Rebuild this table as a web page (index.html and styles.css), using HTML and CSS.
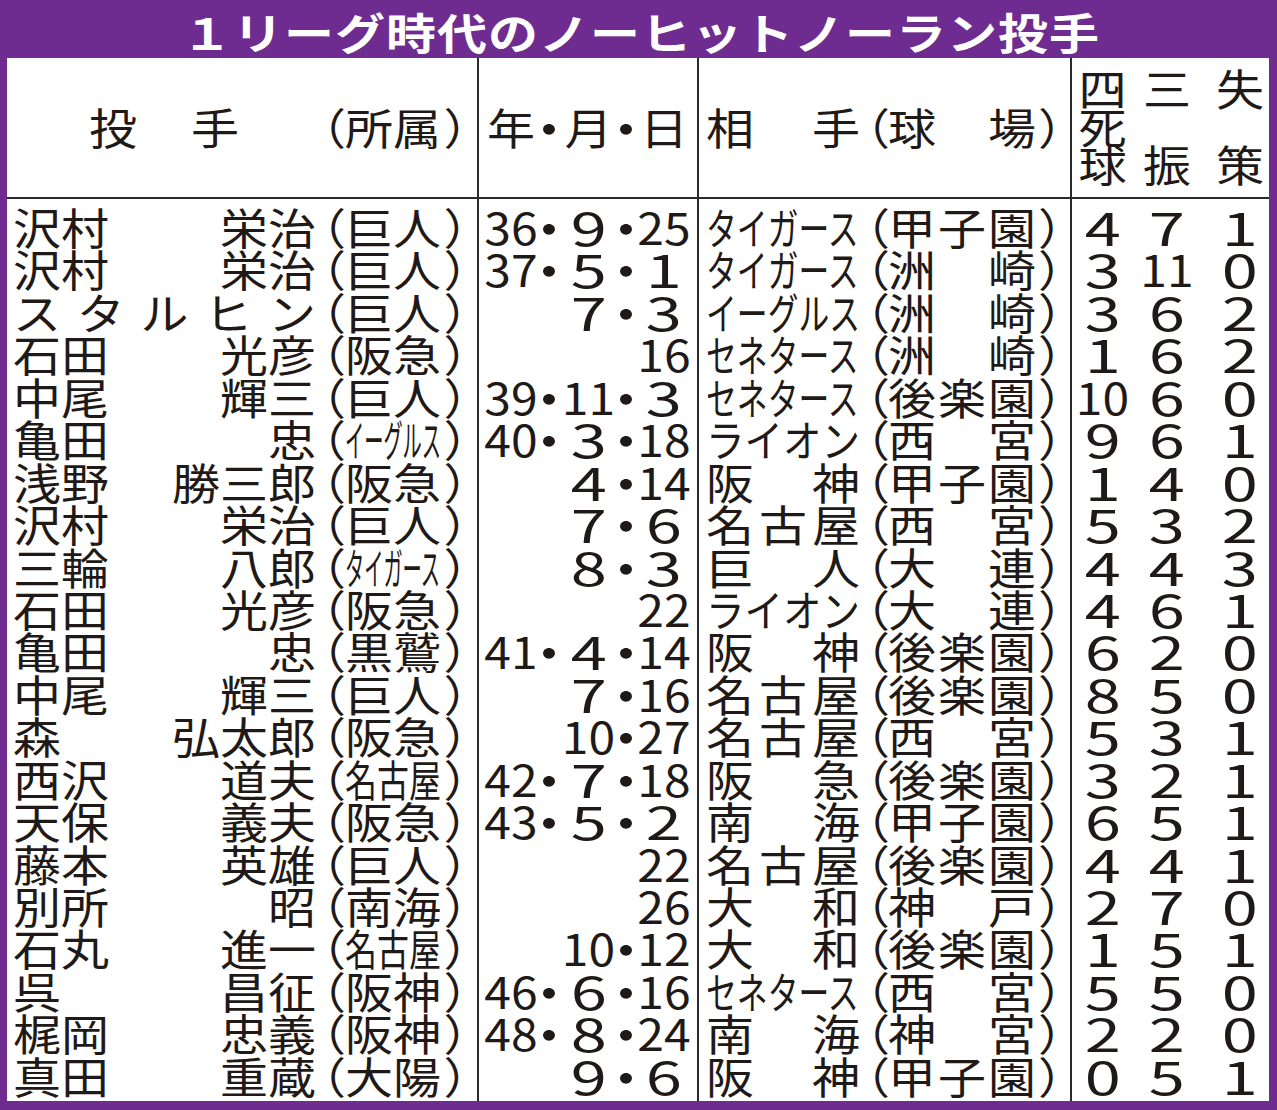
FILE: index.html
```html
<!DOCTYPE html>
<html lang="ja">
<head>
<meta charset="utf-8">
<title>１リーグ時代のノーヒットノーラン投手</title>
<link rel="stylesheet" href="styles.css">
</head>
<body>
<div class="frame">
  <h1 class="title">１リーグ時代のノーヒットノーラン投手</h1>
  <div class="tbl">
    <div class="h nm">
      <div class="r"><span class="hn1">投</span><span class="hn2">手</span><i class="pl hp">（</i><span class="tc">所属</span><i class="pr">）</i></div>
    </div>
    <div class="h dt">
      <div class="r"><span class="s y">年</span><span class="s d1">・</span><span class="s m">月</span><span class="s d2">・</span><span class="s dd">日</span></div>
    </div>
    <div class="h op">
      <div class="r"><span class="tn"><span>相</span><span>手</span></span><i class="pl">（</i><span class="st"><span>球</span><span>場</span></span><i class="pr">）</i></div>
    </div>
    <div class="h sv last">
      <div class="vh"><span>四<br>死<br>球</span><span>三<br><br>振</span><span>失<br><br>策</span></div>
    </div>

    <div class="b nm">
      <div class="r"><span class="sur">沢村</span><span class="gn">栄治</span><i class="pl">（</i><span class="tc">巨人</span><i class="pr">）</i></div>
      <div class="r"><span class="sur">沢村</span><span class="gn">栄治</span><i class="pl">（</i><span class="tc">巨人</span><i class="pr">）</i></div>
      <div class="r"><span class="spread"><span>ス</span><span>タ</span><span>ル</span><span>ヒ</span><span>ン</span></span><i class="pl">（</i><span class="tc">巨人</span><i class="pr">）</i></div>
      <div class="r"><span class="sur">石田</span><span class="gn">光彦</span><i class="pl">（</i><span class="tc">阪急</span><i class="pr">）</i></div>
      <div class="r"><span class="sur">中尾</span><span class="gn">輝三</span><i class="pl">（</i><span class="tc">巨人</span><i class="pr">）</i></div>
      <div class="r"><span class="sur">亀田</span><span class="gn">忠</span><i class="pl">（</i><span class="tc"><span class="sq n5">イーグルス</span></span><i class="pr">）</i></div>
      <div class="r"><span class="sur">浅野</span><span class="gn">勝三郎</span><i class="pl">（</i><span class="tc">阪急</span><i class="pr">）</i></div>
      <div class="r"><span class="sur">沢村</span><span class="gn">栄治</span><i class="pl">（</i><span class="tc">巨人</span><i class="pr">）</i></div>
      <div class="r"><span class="sur">三輪</span><span class="gn">八郎</span><i class="pl">（</i><span class="tc"><span class="sq n5">タイガース</span></span><i class="pr">）</i></div>
      <div class="r"><span class="sur">石田</span><span class="gn">光彦</span><i class="pl">（</i><span class="tc">阪急</span><i class="pr">）</i></div>
      <div class="r"><span class="sur">亀田</span><span class="gn">忠</span><i class="pl">（</i><span class="tc">黒鷲</span><i class="pr">）</i></div>
      <div class="r"><span class="sur">中尾</span><span class="gn">輝三</span><i class="pl">（</i><span class="tc">巨人</span><i class="pr">）</i></div>
      <div class="r"><span class="sur">森</span><span class="gn">弘太郎</span><i class="pl">（</i><span class="tc">阪急</span><i class="pr">）</i></div>
      <div class="r"><span class="sur">西沢</span><span class="gn">道夫</span><i class="pl">（</i><span class="tc"><span class="sq n3">名古屋</span></span><i class="pr">）</i></div>
      <div class="r"><span class="sur">天保</span><span class="gn">義夫</span><i class="pl">（</i><span class="tc">阪急</span><i class="pr">）</i></div>
      <div class="r"><span class="sur">藤本</span><span class="gn">英雄</span><i class="pl">（</i><span class="tc">巨人</span><i class="pr">）</i></div>
      <div class="r"><span class="sur">別所</span><span class="gn">昭</span><i class="pl">（</i><span class="tc">南海</span><i class="pr">）</i></div>
      <div class="r"><span class="sur">石丸</span><span class="gn">進一</span><i class="pl">（</i><span class="tc"><span class="sq n3">名古屋</span></span><i class="pr">）</i></div>
      <div class="r"><span class="sur">呉</span><span class="gn">昌征</span><i class="pl">（</i><span class="tc">阪神</span><i class="pr">）</i></div>
      <div class="r"><span class="sur">梶岡</span><span class="gn">忠義</span><i class="pl">（</i><span class="tc">阪神</span><i class="pr">）</i></div>
      <div class="r"><span class="sur">真田</span><span class="gn">重蔵</span><i class="pl">（</i><span class="tc">大陽</span><i class="pr">）</i></div>
    </div>

    <div class="b dt">
      <div class="r"><span class="s y">36</span><span class="s d1">・</span><span class="s m"><span class="fw">9</span></span><span class="s d2">・</span><span class="s dd">25</span></div>
      <div class="r"><span class="s y">37</span><span class="s d1">・</span><span class="s m"><span class="fw">5</span></span><span class="s d2">・</span><span class="s dd"><span class="fw">1</span></span></div>
      <div class="r"><span class="s y"></span><span class="s d1"></span><span class="s m"><span class="fw">7</span></span><span class="s d2">・</span><span class="s dd"><span class="fw">3</span></span></div>
      <div class="r"><span class="s y"></span><span class="s d1"></span><span class="s m"></span><span class="s d2"></span><span class="s dd">16</span></div>
      <div class="r"><span class="s y">39</span><span class="s d1">・</span><span class="s m">11</span><span class="s d2">・</span><span class="s dd"><span class="fw">3</span></span></div>
      <div class="r"><span class="s y">40</span><span class="s d1">・</span><span class="s m"><span class="fw">3</span></span><span class="s d2">・</span><span class="s dd">18</span></div>
      <div class="r"><span class="s y"></span><span class="s d1"></span><span class="s m"><span class="fw">4</span></span><span class="s d2">・</span><span class="s dd">14</span></div>
      <div class="r"><span class="s y"></span><span class="s d1"></span><span class="s m"><span class="fw">7</span></span><span class="s d2">・</span><span class="s dd"><span class="fw">6</span></span></div>
      <div class="r"><span class="s y"></span><span class="s d1"></span><span class="s m"><span class="fw">8</span></span><span class="s d2">・</span><span class="s dd"><span class="fw">3</span></span></div>
      <div class="r"><span class="s y"></span><span class="s d1"></span><span class="s m"></span><span class="s d2"></span><span class="s dd">22</span></div>
      <div class="r"><span class="s y">41</span><span class="s d1">・</span><span class="s m"><span class="fw">4</span></span><span class="s d2">・</span><span class="s dd">14</span></div>
      <div class="r"><span class="s y"></span><span class="s d1"></span><span class="s m"><span class="fw">7</span></span><span class="s d2">・</span><span class="s dd">16</span></div>
      <div class="r"><span class="s y"></span><span class="s d1"></span><span class="s m">10</span><span class="s d2">・</span><span class="s dd">27</span></div>
      <div class="r"><span class="s y">42</span><span class="s d1">・</span><span class="s m"><span class="fw">7</span></span><span class="s d2">・</span><span class="s dd">18</span></div>
      <div class="r"><span class="s y">43</span><span class="s d1">・</span><span class="s m"><span class="fw">5</span></span><span class="s d2">・</span><span class="s dd"><span class="fw">2</span></span></div>
      <div class="r"><span class="s y"></span><span class="s d1"></span><span class="s m"></span><span class="s d2"></span><span class="s dd">22</span></div>
      <div class="r"><span class="s y"></span><span class="s d1"></span><span class="s m"></span><span class="s d2"></span><span class="s dd">26</span></div>
      <div class="r"><span class="s y"></span><span class="s d1"></span><span class="s m">10</span><span class="s d2">・</span><span class="s dd">12</span></div>
      <div class="r"><span class="s y">46</span><span class="s d1">・</span><span class="s m"><span class="fw">6</span></span><span class="s d2">・</span><span class="s dd">16</span></div>
      <div class="r"><span class="s y">48</span><span class="s d1">・</span><span class="s m"><span class="fw">8</span></span><span class="s d2">・</span><span class="s dd">24</span></div>
      <div class="r"><span class="s y"></span><span class="s d1"></span><span class="s m"><span class="fw">9</span></span><span class="s d2">・</span><span class="s dd"><span class="fw">6</span></span></div>
    </div>

    <div class="b op">
      <div class="r"><span class="tn"><span class="sq o5">タイガース</span></span><i class="pl">（</i><span class="st"><span>甲</span><span>子</span><span>園</span></span><i class="pr">）</i></div>
      <div class="r"><span class="tn"><span class="sq o5">タイガース</span></span><i class="pl">（</i><span class="st"><span>洲</span><span>崎</span></span><i class="pr">）</i></div>
      <div class="r"><span class="tn"><span class="sq o5">イーグルス</span></span><i class="pl">（</i><span class="st"><span>洲</span><span>崎</span></span><i class="pr">）</i></div>
      <div class="r"><span class="tn"><span class="sq o5">セネタース</span></span><i class="pl">（</i><span class="st"><span>洲</span><span>崎</span></span><i class="pr">）</i></div>
      <div class="r"><span class="tn"><span class="sq o5">セネタース</span></span><i class="pl">（</i><span class="st"><span>後</span><span>楽</span><span>園</span></span><i class="pr">）</i></div>
      <div class="r"><span class="tn"><span class="sq o4">ライオン</span></span><i class="pl">（</i><span class="st"><span>西</span><span>宮</span></span><i class="pr">）</i></div>
      <div class="r"><span class="tn"><span>阪</span><span>神</span></span><i class="pl">（</i><span class="st"><span>甲</span><span>子</span><span>園</span></span><i class="pr">）</i></div>
      <div class="r"><span class="tn"><span>名</span><span>古</span><span>屋</span></span><i class="pl">（</i><span class="st"><span>西</span><span>宮</span></span><i class="pr">）</i></div>
      <div class="r"><span class="tn"><span>巨</span><span>人</span></span><i class="pl">（</i><span class="st"><span>大</span><span>連</span></span><i class="pr">）</i></div>
      <div class="r"><span class="tn"><span class="sq o4">ライオン</span></span><i class="pl">（</i><span class="st"><span>大</span><span>連</span></span><i class="pr">）</i></div>
      <div class="r"><span class="tn"><span>阪</span><span>神</span></span><i class="pl">（</i><span class="st"><span>後</span><span>楽</span><span>園</span></span><i class="pr">）</i></div>
      <div class="r"><span class="tn"><span>名</span><span>古</span><span>屋</span></span><i class="pl">（</i><span class="st"><span>後</span><span>楽</span><span>園</span></span><i class="pr">）</i></div>
      <div class="r"><span class="tn"><span>名</span><span>古</span><span>屋</span></span><i class="pl">（</i><span class="st"><span>西</span><span>宮</span></span><i class="pr">）</i></div>
      <div class="r"><span class="tn"><span>阪</span><span>急</span></span><i class="pl">（</i><span class="st"><span>後</span><span>楽</span><span>園</span></span><i class="pr">）</i></div>
      <div class="r"><span class="tn"><span>南</span><span>海</span></span><i class="pl">（</i><span class="st"><span>甲</span><span>子</span><span>園</span></span><i class="pr">）</i></div>
      <div class="r"><span class="tn"><span>名</span><span>古</span><span>屋</span></span><i class="pl">（</i><span class="st"><span>後</span><span>楽</span><span>園</span></span><i class="pr">）</i></div>
      <div class="r"><span class="tn"><span>大</span><span>和</span></span><i class="pl">（</i><span class="st"><span>神</span><span>戸</span></span><i class="pr">）</i></div>
      <div class="r"><span class="tn"><span>大</span><span>和</span></span><i class="pl">（</i><span class="st"><span>後</span><span>楽</span><span>園</span></span><i class="pr">）</i></div>
      <div class="r"><span class="tn"><span class="sq o5">セネタース</span></span><i class="pl">（</i><span class="st"><span>西</span><span>宮</span></span><i class="pr">）</i></div>
      <div class="r"><span class="tn"><span>南</span><span>海</span></span><i class="pl">（</i><span class="st"><span>神</span><span>宮</span></span><i class="pr">）</i></div>
      <div class="r"><span class="tn"><span>阪</span><span>神</span></span><i class="pl">（</i><span class="st"><span>甲</span><span>子</span><span>園</span></span><i class="pr">）</i></div>
    </div>

    <div class="b sv last">
      <div class="r"><span class="c"><span class="fw">4</span></span><span class="c"><span class="fw">7</span></span><span class="c"><span class="fw">1</span></span></div>
      <div class="r"><span class="c"><span class="fw">3</span></span><span class="c">11</span><span class="c"><span class="fw">0</span></span></div>
      <div class="r"><span class="c"><span class="fw">3</span></span><span class="c"><span class="fw">6</span></span><span class="c"><span class="fw">2</span></span></div>
      <div class="r"><span class="c"><span class="fw">1</span></span><span class="c"><span class="fw">6</span></span><span class="c"><span class="fw">2</span></span></div>
      <div class="r"><span class="c">10</span><span class="c"><span class="fw">6</span></span><span class="c"><span class="fw">0</span></span></div>
      <div class="r"><span class="c"><span class="fw">9</span></span><span class="c"><span class="fw">6</span></span><span class="c"><span class="fw">1</span></span></div>
      <div class="r"><span class="c"><span class="fw">1</span></span><span class="c"><span class="fw">4</span></span><span class="c"><span class="fw">0</span></span></div>
      <div class="r"><span class="c"><span class="fw">5</span></span><span class="c"><span class="fw">3</span></span><span class="c"><span class="fw">2</span></span></div>
      <div class="r"><span class="c"><span class="fw">4</span></span><span class="c"><span class="fw">4</span></span><span class="c"><span class="fw">3</span></span></div>
      <div class="r"><span class="c"><span class="fw">4</span></span><span class="c"><span class="fw">6</span></span><span class="c"><span class="fw">1</span></span></div>
      <div class="r"><span class="c"><span class="fw">6</span></span><span class="c"><span class="fw">2</span></span><span class="c"><span class="fw">0</span></span></div>
      <div class="r"><span class="c"><span class="fw">8</span></span><span class="c"><span class="fw">5</span></span><span class="c"><span class="fw">0</span></span></div>
      <div class="r"><span class="c"><span class="fw">5</span></span><span class="c"><span class="fw">3</span></span><span class="c"><span class="fw">1</span></span></div>
      <div class="r"><span class="c"><span class="fw">3</span></span><span class="c"><span class="fw">2</span></span><span class="c"><span class="fw">1</span></span></div>
      <div class="r"><span class="c"><span class="fw">6</span></span><span class="c"><span class="fw">5</span></span><span class="c"><span class="fw">1</span></span></div>
      <div class="r"><span class="c"><span class="fw">4</span></span><span class="c"><span class="fw">4</span></span><span class="c"><span class="fw">1</span></span></div>
      <div class="r"><span class="c"><span class="fw">2</span></span><span class="c"><span class="fw">7</span></span><span class="c"><span class="fw">0</span></span></div>
      <div class="r"><span class="c"><span class="fw">1</span></span><span class="c"><span class="fw">5</span></span><span class="c"><span class="fw">1</span></span></div>
      <div class="r"><span class="c"><span class="fw">5</span></span><span class="c"><span class="fw">5</span></span><span class="c"><span class="fw">0</span></span></div>
      <div class="r"><span class="c"><span class="fw">2</span></span><span class="c"><span class="fw">2</span></span><span class="c"><span class="fw">0</span></span></div>
      <div class="r"><span class="c"><span class="fw">0</span></span><span class="c"><span class="fw">5</span></span><span class="c"><span class="fw">1</span></span></div>
    </div>
  </div>
</div>
</body>
</html>
```
FILE: styles.css
```css
* { box-sizing: border-box; margin: 0; padding: 0; }
html, body { width: 1277px; height: 1110px; overflow: hidden; }
body {
  background: #6e2b90;
  font-family: "Noto Sans CJK JP", "Noto Sans CJK SC", sans-serif;
  color: #1f1a17;
}
.frame {
  height: 1110px;
  padding: 0 8px 9px 7px;
  display: flex;
  flex-direction: column;
}
.title {
  height: 58px;
  flex: none;
  color: #fff;
  font-size: 50px;
  font-weight: 700;
  line-height: 58px;
  letter-spacing: 1px;
  text-align: center;
  padding: 2px 0 0 6px;
  transform: scaleY(.86);
  white-space: nowrap;
}
.tbl {
  flex: 1;
  background: #fff;
  display: grid;
  grid-template-columns: 472px 220px 373px 197px;
  grid-template-rows: 141px 1fr;
}
.h, .b { border-right: 2px solid #2a2a2a; }
.last { border-right: none; }
.h {
  border-bottom: 2px solid #2a2a2a;
  display: flex;
  align-items: center;
  padding-bottom: 3px;
}
.h .r { width: 100%; }
.b { padding-top: 6px; }

.r {
  display: flex;
  align-items: center;
  height: 42.45px;
  line-height: 42.45px;
  font-size: 48px;
  white-space: nowrap;
  transform: scaleY(.9);
}
i { font-style: normal; }
.r > span { flex: none; }

/* name column */
.nm .r { padding: 0 7px 0 6px; }
.gn { margin-left: auto; }
.spread { display: flex; justify-content: space-between; width: 303px; }
.hn1 { margin-left: 76px; }
.hn2 { margin-left: 54px; }
.hp { margin-left: auto; }
.pl, .pr {
  flex: none;
  width: 29px;
  text-align: center;
  font-feature-settings: "halt";
}
.pl { padding-left: 6px; }
.tc { width: 96px; display: flex; justify-content: space-between; }

/* compressed katakana / long names */
.sq { display: inline-block; transform-origin: left center; }
.n5 { transform: scaleX(.4); }
.n3 { transform: scaleX(.667); }
.o5 { transform: scaleX(.642); }
.o4 { transform: scaleX(.802); }

/* date column */
.dt .r { padding-left: 5px; }
.s { display: flex; justify-content: center; }
.y { width: 54px; }
.d1 { width: 22px; font-size: 56px; }
.m { width: 57px; }
.d2 { width: 18px; font-size: 56px; }
.dd { width: 58px; }
.fw {
  display: inline-block;
  font-size: 50px;
  transform: scaleX(1.3);
}

/* opponent column */
.op .r { padding-left: 7px; }
.tn { width: 154px; display: flex; justify-content: space-between; }
.st { width: 148px; display: flex; justify-content: space-between; }
.op .pl, .op .pr { width: 28px; }

/* stats column */
.sv .r {
  display: grid;
  grid-template-columns: 61px 68px 68px;
}
.c { display: flex; justify-content: center; }
.c:nth-child(3) { padding-left: 10px; }
.h.sv { padding-bottom: 6px; }
.vh {
  display: grid;
  grid-template-columns: 61px 68px 68px;
  font-size: 48px;
  line-height: 42px;
  transform: scaleY(.9);
  width: 100%;
}
.vh span { text-align: center; }
.vh span:nth-child(3) { padding-left: 10px; }
```
